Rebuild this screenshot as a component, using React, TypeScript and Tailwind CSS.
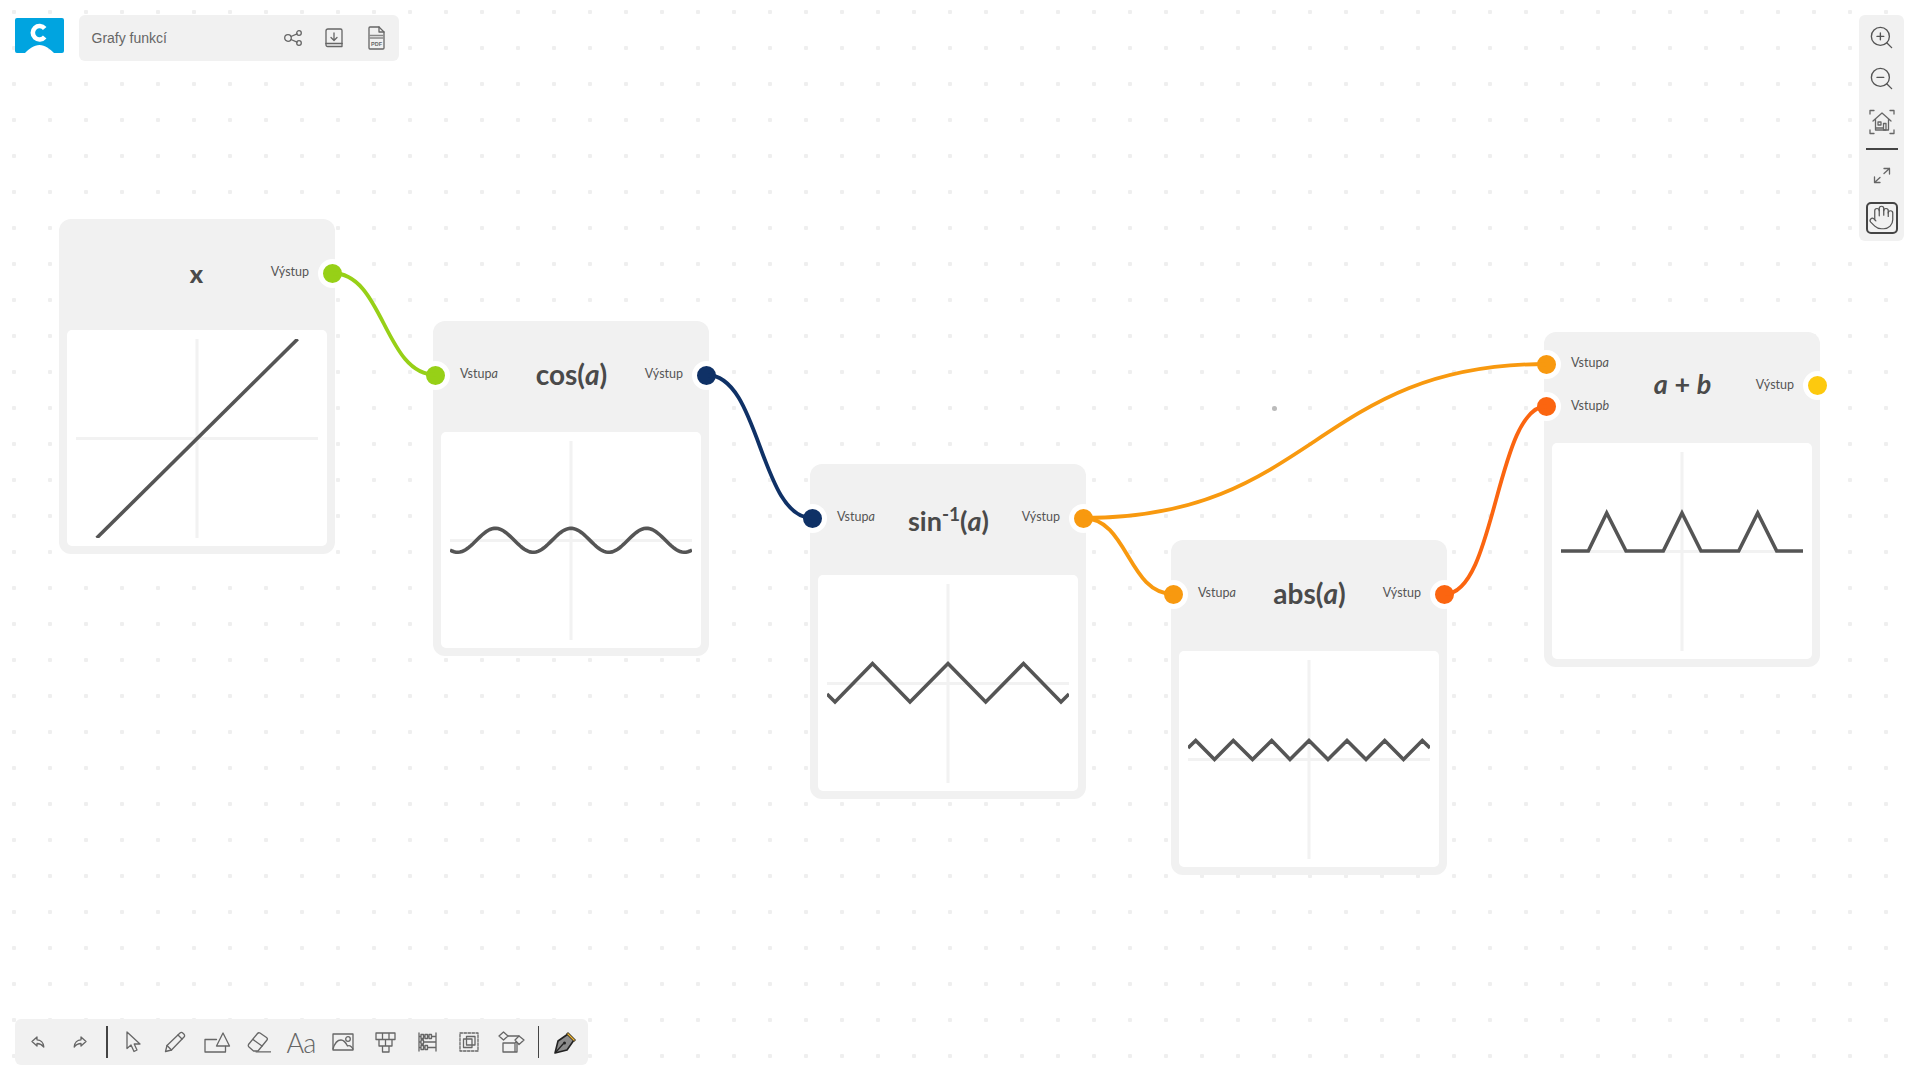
import React from 'react';
import { Hand, ZoomIn, ZoomOut } from 'lucide-react';

const grey = '#666666';

const cosCurve = () => {
    const pts: string[] = [];
    for (let x = 0; x <= 242; x += 2) {
        const y = 99.3 - 12 * Math.cos((2 * Math.PI * (x - 121)) / 75.6);
        pts.push(`${x},${y.toFixed(2)}`);
    }
    return pts.join(' ');
};

const Plot = ({ points }: { points: string }) => (
    <svg width="242" height="199" viewBox="0 0 242 199" className="block">
        <path d="M121 0V199M0 99.5H242" stroke="#f2f2f2" strokeWidth="3" fill="none" />
        <polyline points={points} stroke="#555555" strokeWidth="3.6" fill="none" strokeLinejoin="miter" />
    </svg>
);

const Port = ({ color, side, y }: { color: string; side: 'left' | 'right'; y: string }) => (
    <span
        className={`absolute w-[29px] h-[29px] rounded-full border-[5px] border-white ${side === 'left' ? 'left-[-12px]' : 'right-[-12px]'} ${y}`}
        style={{ backgroundColor: color }}
    />
);

const Input = ({ name }: { name: string }) => (
    <span>Vstup<i>{name}</i></span>
);

const nodes = [
    {
        id: 'x',
        pos: 'left-[59px] top-[219px]',
        title: <span className="font-black text-[25px] relative left-[-1px]">x</span>,
        inputs: [] as { name: string; color: string; y: string }[],
        output: '#97d017',
        outY: 'top-[39.5px]',
        points: '20.7,199 221.7,0',
    },
    {
        id: 'cos',
        pos: 'left-[433px] top-[321px]',
        title: <span>cos(<i>a</i>)</span>,
        inputs: [{ name: 'a', color: '#97d017', y: 'top-[39.5px]' }],
        output: '#0f3166',
        outY: 'top-[39.5px]',
        points: cosCurve(),
    },
    {
        id: 'sin',
        pos: 'left-[810px] top-[464px]',
        title: <span className="relative top-[3px] text-[27px]">sin<sup className="text-[19px] top-[-10px] relative align-baseline">-1</sup>(<i>a</i>)</span>,
        inputs: [{ name: 'a', color: '#0f3166', y: 'top-[39.5px]' }],
        output: '#f8990f',
        outY: 'top-[39.5px]',
        points: '0,110 8,118 45.5,79.5 83,118 121,79.5 158.7,118 196.5,79.5 234,118 242,110',
    },
    {
        id: 'abs',
        pos: 'left-[1171px] top-[540px]',
        title: <span>abs(<i>a</i>)</span>,
        inputs: [{ name: 'a', color: '#f8990f', y: 'top-[39.5px]' }],
        output: '#fb6510',
        outY: 'top-[39.5px]',
        points: '0,88 7.7,80.5 26.5,99.5 45.3,80.5 64.5,99.5 83.7,80.5 102,99.5 121,80.5 140,99.5 159,80.5 178,99.5 196.7,80.5 215.5,99.5 234.3,80.5 242,88',
    },
    {
        id: 'sum',
        pos: 'left-[1544px] top-[332px]',
        title: <span className="relative top-[-2px] text-[27px]"><i>a</i> + <i>b</i></span>,
        inputs: [
            { name: 'a', color: '#f8990f', y: 'top-[17.5px]' },
            { name: 'b', color: '#fb6510', y: 'top-[59.5px]' },
        ],
        output: '#fdc90e',
        outY: 'top-[38.5px]',
        points: '0,99 27.3,99 45.7,61 65,99 102.3,99 121,61 140,99 177.7,99 196.7,61 215.7,99 242,99',
    },
];

const wires = [
    { d: 'M332 273C384 273 384 375 436 375', color: '#97d017' },
    { d: 'M707 375C760 375 760 518 812 518', color: '#0f3166' },
    { d: 'M1083 518C1128 518 1128 594 1173 594', color: '#f8990f' },
    { d: 'M1083 518C1315 518 1315 364 1547 364', color: '#f8990f' },
    { d: 'M1445 594C1496 594 1496 406 1547 406', color: '#fb6510' },
];

const Icon = ({ w, h, children }: { w: number; h: number; children: React.ReactNode }) => (
    <svg width={w} height={h} viewBox={`0 0 ${w} ${h}`} fill="none" stroke={grey} strokeWidth="1.3" strokeLinejoin="round" strokeLinecap="round">
        {children}
    </svg>
);

const Tool = ({ children }: { children: React.ReactNode }) => (
    <div className="w-[42px] h-full flex items-center justify-center">{children}</div>
);

const App = () => {
    return (
        <div className="relative w-full h-screen overflow-hidden bg-white bg-[radial-gradient(circle,#efefef_2px,transparent_2.5px)] bg-[size:36px_36px] bg-[position:-4px_-6px] flex flex-col justify-between font-['Lato',sans-serif]">
            {/* Canvas */}
            <div className="absolute inset-0">
                {nodes.map((node) => (
                    <div key={node.id} className={`absolute w-[276px] h-[335px] bg-[#f1f1f1] rounded-xl ${node.pos}`}>
                        <div className="h-[111px] pb-[4px] pl-[27px] pr-[26px] grid grid-cols-[1fr_auto_1fr] items-center text-[#4a4a4a]">
                            <div className="flex flex-col gap-[24px] text-[12.5px] text-[#555555] -mt-[1px]">
                                {node.inputs.map((input) => <Input key={input.name} name={input.name} />)}
                            </div>
                            <div className="text-[28px] font-bold leading-none whitespace-nowrap -mt-[2px]">{node.title}</div>
                            <div className="text-[12.5px] text-[#555555] text-right -mt-[1px]">{'Výstup'}</div>
                        </div>
                        <div className="mx-2 h-[216px] bg-white rounded-[5px] flex items-center justify-center">
                            <Plot points={node.points} />
                        </div>
                        {node.inputs.map((input) => (
                            <Port key={input.name} color={input.color} side="left" y={input.y} />
                        ))}
                        <Port color={node.output} side="right" y={node.outY} />
                    </div>
                ))}
                <svg className="absolute inset-0 w-full h-full pointer-events-none" fill="none" strokeWidth="3.8">
                    {wires.map((wire) => <path key={wire.d} d={wire.d} stroke={wire.color} />)}
                </svg>
                <span className="absolute left-[1272px] top-[406px] w-[5px] h-[5px] rounded-full bg-[#bbbbbb]" />
            </div>

            {/* Top */}
            <div className="relative flex items-start justify-between pt-[15px] pl-[15px] pr-4">
                <div className="flex items-start gap-[15px]">
                    <svg width="49" height="35" viewBox="0 0 49 35" className="mt-[3px]">
                        <path d="M2 0H47a2 2 0 0 1 2 2V33a2 2 0 0 1-2 2H39C35 31 30 27 24.5 27S14 31 10 35H2a2 2 0 0 1-2-2V2a2 2 0 0 1 2-2Z" fill="#00a4e0" />
                        <path d="M29.7 10.5A6.7 6.7 0 1 0 29.7 19" stroke="#ffffff" strokeWidth="4.6" fill="none" />
                    </svg>
                    <div className="w-[320px] h-[46px] bg-[#f1f1f1] rounded-[6px] flex items-center pl-[12.5px] pr-[14px] font-['Liberation_Sans',sans-serif] text-[14px] text-[#666666]">
                        <span className="flex-1">Grafy funkcí</span>
                        <div className="flex items-center">
                            <div className="mr-[23px]">
                                <Icon w={18} h={16}>
                                    <circle cx="4" cy="8" r="3.3" />
                                    <circle cx="15" cy="3" r="2.3" />
                                    <circle cx="15" cy="13" r="2.3" />
                                    <path d="M7 6.5L13 3.8M7 9.5L13 12.2" />
                                </Icon>
                            </div>
                            <div className="mr-[25px]">
                                <Icon w={18} h={20}>
                                    <path d="M3 1H15.5a1.5 1.5 0 0 1 1.5 1.5V18.5H2.5a1.5 1.5 0 0 1-1.5-1.5V3a2 2 0 0 1 2-2Z" />
                                    <path d="M1 15.5H17" strokeWidth="1.6" />
                                    <path d="M9 5V12M6 9.5L9 12.5L12 9.5" />
                                </Icon>
                            </div>
                            <Icon w={17} h={24}>
                                <path d="M2 1H11L16 6V22a1 1 0 0 1-1 1H2a1 1 0 0 1-1-1V2a1 1 0 0 1 1-1Z" />
                                <path d="M11 1V6H16" />
                                <path d="M2 9.5H15M2 12H15" stroke="#888888" />
                                <text x="8.5" y="20" textAnchor="middle" fontSize="5.5" fontWeight="700" stroke="none" fill={grey} fontFamily="Liberation Sans, sans-serif">PDF</text>
                            </Icon>
                        </div>
                    </div>
                </div>

                <div className="w-[45px] h-[226px] bg-[#f1f1f1] rounded-[6px] flex flex-col items-center text-[#555555]">
                    <div className="h-[36px] flex items-end"><ZoomIn size={27} strokeWidth={1.2} /></div>
                    <div className="h-[41px] flex items-end"><ZoomOut size={27} strokeWidth={1.2} /></div>
                    <div className="h-[42.5px] flex items-end">
                        <Icon w={26} h={26}>
                            <path d="M1 5V1.5H5M21 1.5H25V5M1 21V24.5H5M21 24.5H25V21" />
                            <path d="M4 12L13 4L22 12M6.5 10V21H19.5V10" />
                            <path d="M9 13H12V16H9ZM14.5 14.5H17V21H14.5ZM7 19H14" />
                        </Icon>
                    </div>
                    <div className="w-8 h-[2px] bg-[#444444] mt-[13px]" />
                    <div className="h-[34px] flex items-end">
                        <Icon w={18} h={17}>
                            <path d="M1.5 15.5L7 10.5M11 6.5L16.5 1.5M11 1.5H16.5V7M1.5 10V15.5H7" />
                        </Icon>
                    </div>
                    <div className="w-[32px] h-[32px] mt-[18px] border-2 border-[#444444] rounded-[5px] flex items-center justify-center">
                        <Hand size={27} strokeWidth={1.1} />
                    </div>
                </div>
            </div>

            {/* Bottom */}
            <div className="relative pl-[15px] pb-[15px]">
                <div className="w-[573px] h-[46px] px-[2px] bg-[#f1f1f1] rounded-[6px] flex items-center">
                    <Tool>
                        <Icon w={14} h={12}><path d="M6 1L1 5.5L6 10V7.5C9 7.5 11 8.8 12.8 11C12.5 6.5 9.5 3.8 6 3.8Z" /></Icon>
                    </Tool>
                    <Tool>
                        <Icon w={14} h={12}><path d="M8 1L13 5.5L8 10V7.5C5 7.5 3 8.8 1.2 11C1.5 6.5 4.5 3.8 8 3.8Z" /></Icon>
                    </Tool>
                    <div className="w-[2px] h-8 ml-[5px] mr-[4px] bg-[#444444]" />
                    <Tool>
                        <Icon w={15} h={22}><path d="M1 1V17.5L5 14L8 20.5L11 19L8.2 13H14Z" /></Icon>
                    </Tool>
                    <Tool>
                        <Icon w={22} h={22}>
                            <path d="M1.5 20.5L3 14.5L16 2Q17.5 0.8 19 2.2L20 3.2Q21.2 4.7 20 6L7.5 19Z" />
                            <path d="M3 14.5L7.5 19M14 4L18 8" />
                        </Icon>
                    </Tool>
                    <Tool>
                        <Icon w={27} h={21}>
                            <path d="M12.5 7.5H1V20H21.5V14.5" />
                            <path d="M19 1L12.5 14H25.5Z" />
                        </Icon>
                    </Tool>
                    <Tool>
                        <Icon w={24} h={22}>
                            <path d="M1.5 13.5L10.5 2.5Q11.5 1.3 13 2L19.5 6.5Q21 7.5 20 9L11 20H6.5L2 16Q0.8 14.8 1.5 13.5Z" />
                            <path d="M6 8.5L15 15M9 20.8H23.5" />
                        </Icon>
                    </Tool>
                    <Tool>
                        <span className="text-[27px] font-light leading-none text-[#666666] font-['Lato',sans-serif] tracking-[-1px]">Aa</span>
                    </Tool>
                    <Tool>
                        <Icon w={22} h={18}>
                            <path d="M1 1H21V17H1Z" />
                            <circle cx="16" cy="6" r="2.3" />
                            <path d="M1 16C3 9 6.5 7 9 7C12 7 14 10 15.5 13C17 12 19 12.5 21 16" />
                        </Icon>
                    </Tool>
                    <Tool>
                        <Icon w={21} h={21}>
                            <path d="M1 1H20V7.5H1ZM7.5 1V7.5M14 1V7.5M4 7.5V14H17V7.5M10.5 7.5V14M7.5 14V20H14V14" />
                        </Icon>
                    </Tool>
                    <Tool>
                        <Icon w={19} h={20}>
                            <path d="M1 1V19M18 1V19M1 4.5H18M1 10H18M1 15.5H18" />
                            <path d="M3 2.5h2.5v4H3ZM7 2.5h2.5v4H7ZM11 2.5h2.5v4H11ZM3 8h2.5v4H3ZM3 13.5h2.5v4H3ZM7 13.5h2.5v4H7Z" fill="#f1f1f1" />
                        </Icon>
                    </Tool>
                    <Tool>
                        <Icon w={20} h={20}>
                            <path d="M1 1H19V19H1Z" strokeDasharray="2.5 1.5" />
                            <path d="M4.5 7H13V15.5H4.5ZM7.5 4.5H16V13H7.5Z" />
                        </Icon>
                    </Tool>
                    <Tool>
                        <Icon w={28} h={22}>
                            <path d="M6.5 1L11 5L6.5 9L2 5Z" />
                            <path d="M11 5H22M20 10V21H6V12M6 12H18L20 10M18 12V21" />
                            <path d="M22 5L27 9L22 13.5L18 9Z" fill="#f1f1f1" />
                        </Icon>
                    </Tool>
                    <div className="w-px h-8 mx-[5.5px] bg-[#444444]" />
                    <Tool>
                        <svg width="23" height="23" viewBox="0 0 23 23">
                            <path d="M1 22L4 10L14 3L20 9L13 19Z" fill="#8c8c8c" stroke="#222222" strokeWidth="1.6" strokeLinejoin="round" />
                            <path d="M1.5 21.5L9.5 12.5" stroke="#222222" strokeWidth="1.2" />
                            <circle cx="10.5" cy="12" r="1.5" fill="#222222" />
                            <path d="M14 1.5L21.5 9L20 10.5L12.5 3Z" fill="#f5b82e" stroke="#222222" strokeWidth="1" strokeLinejoin="round" />
                        </svg>
                    </Tool>
                </div>
            </div>
        </div>
    );
};

export default App;
